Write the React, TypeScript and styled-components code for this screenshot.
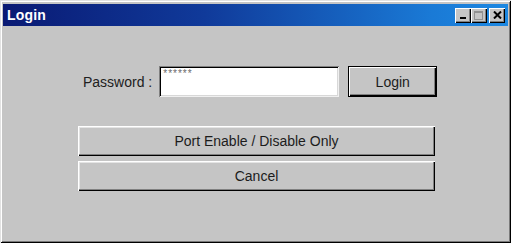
import React from 'react';
import styled, { createGlobalStyle } from 'styled-components';

const GlobalStyle = createGlobalStyle`
    html, body {
        margin: 0;
        padding: 0;
        background: #ffffff;
    }
    body {
        font-family: 'Liberation Sans', Arial, sans-serif;
    }
`;

const Window = styled.div`
    box-sizing: border-box;
    width: 511px;
    height: 243px;
    padding: 4px 3px 3px 3px;
    background: #c5c5c5;
    display: flex;
    flex-direction: column;
    box-shadow: inset 1px 1px 0 #e2e2e2, inset -1px -1px 0 #000000,
        inset 2px 2px 0 #ffffff, inset -2px -2px 0 #7a7a7a;
`;

const TitleBar = styled.div`
    height: 22px;
    display: flex;
    align-items: center;
    padding: 0 3px 0 4px;
    background: linear-gradient(to right, #0a1a74 0%, #103a9a 40%, #1a7ad6 85%, #1c88e2 100%);
`;

const Title = styled.span`
    flex: 1;
    color: #ffffff;
    font-weight: bold;
    font-size: 14px;
    letter-spacing: 0.2px;
`;

const CaptionButtons = styled.div`
    display: flex;
    align-items: center;
`;

const CaptionButton = styled.span<{ gap?: number }>`
    box-sizing: border-box;
    width: 16px;
    height: 15px;
    margin-left: ${props => props.gap ?? 0}px;
    display: flex;
    align-items: center;
    justify-content: center;
    background: #c5c5c5;
    box-shadow: inset 1px 1px 0 #ffffff, inset -1px -1px 0 #000000,
        inset -2px -2px 0 #808080;
`;

const Body = styled.div`
    flex: 1;
    display: flex;
    flex-direction: column;
    padding: 40px 73px 0 75px;
`;

const PasswordRow = styled.div`
    display: flex;
    align-items: center;
    padding-left: 5px;
    margin-bottom: 29px;
`;

const Label = styled.span`
    flex-shrink: 0;
    white-space: nowrap;
    font-size: 14px;
    color: #202020;
    margin-right: 7px;
`;

const Input = styled.div`
    box-sizing: border-box;
    flex-shrink: 0;
    width: 180px;
    height: 31px;
    margin-right: 9px;
    padding: 3px 4px;
    background: #ffffff;
    font-size: 10px;
    line-height: 10px;
    color: #6a6a6a;
    letter-spacing: 1px;
    box-shadow: inset 1px 1px 0 #808080, inset -1px -1px 0 #f0f0f0,
        inset 2px 2px 0 #000000, inset -2px -2px 0 #d8d8d8;
`;

const Button = styled.div<{ width?: number; isDefault?: boolean }>`
    box-sizing: border-box;
    flex-shrink: 0;
    width: ${props => (props.width ? `${props.width}px` : '100%')};
    height: ${props => (props.isDefault ? 31 : 30)}px;
    margin-bottom: 5px;
    display: flex;
    align-items: center;
    justify-content: center;
    font-size: 14px;
    color: #1c1c1c;
    background: #c5c5c5;
    box-shadow: ${props =>
        props.isDefault
            ? 'inset 1px 1px 0 #000, inset -1px -1px 0 #000, inset 2px 2px 0 #fff, inset -2px -2px 0 #000, inset -3px -3px 0 #808080'
            : 'inset 1px 1px 0 #ffffff, inset -1px -1px 0 #000000, inset -2px -2px 0 #808080, inset 2px 2px 0 #e4e4e4'};
`;

const RowButton = styled(Button)`
    margin-bottom: 0;
`;

const App = () => (
    <>
        <GlobalStyle />
        <Window>
            <TitleBar>
                <Title>Login</Title>
                <CaptionButtons>
                    <CaptionButton>
                        <svg width="8" height="9" viewBox="0 0 8 9">
                            <rect x="1" y="6" width="6" height="2" fill="#000" />
                        </svg>
                    </CaptionButton>
                    <CaptionButton>
                        <svg width="10" height="9" viewBox="0 0 10 9">
                            <rect x="0.5" y="0.5" width="8" height="8" fill="none" stroke="#909090" />
                            <rect x="0.5" y="0.5" width="8" height="1.5" fill="#909090" />
                        </svg>
                    </CaptionButton>
                    <CaptionButton gap={2}>
                        <svg width="9" height="8" viewBox="0 0 9 8">
                            <path d="M1 0.5 L8 7.5 M8 0.5 L1 7.5" stroke="#000" strokeWidth="2" />
                        </svg>
                    </CaptionButton>
                </CaptionButtons>
            </TitleBar>
            <Body>
                <PasswordRow>
                    <Label>Password :</Label>
                    <Input>******</Input>
                    <RowButton width={89} isDefault>
                        Login
                    </RowButton>
                </PasswordRow>
                <Button>Port Enable / Disable Only</Button>
                <Button>Cancel</Button>
            </Body>
        </Window>
    </>
);

export default App;
